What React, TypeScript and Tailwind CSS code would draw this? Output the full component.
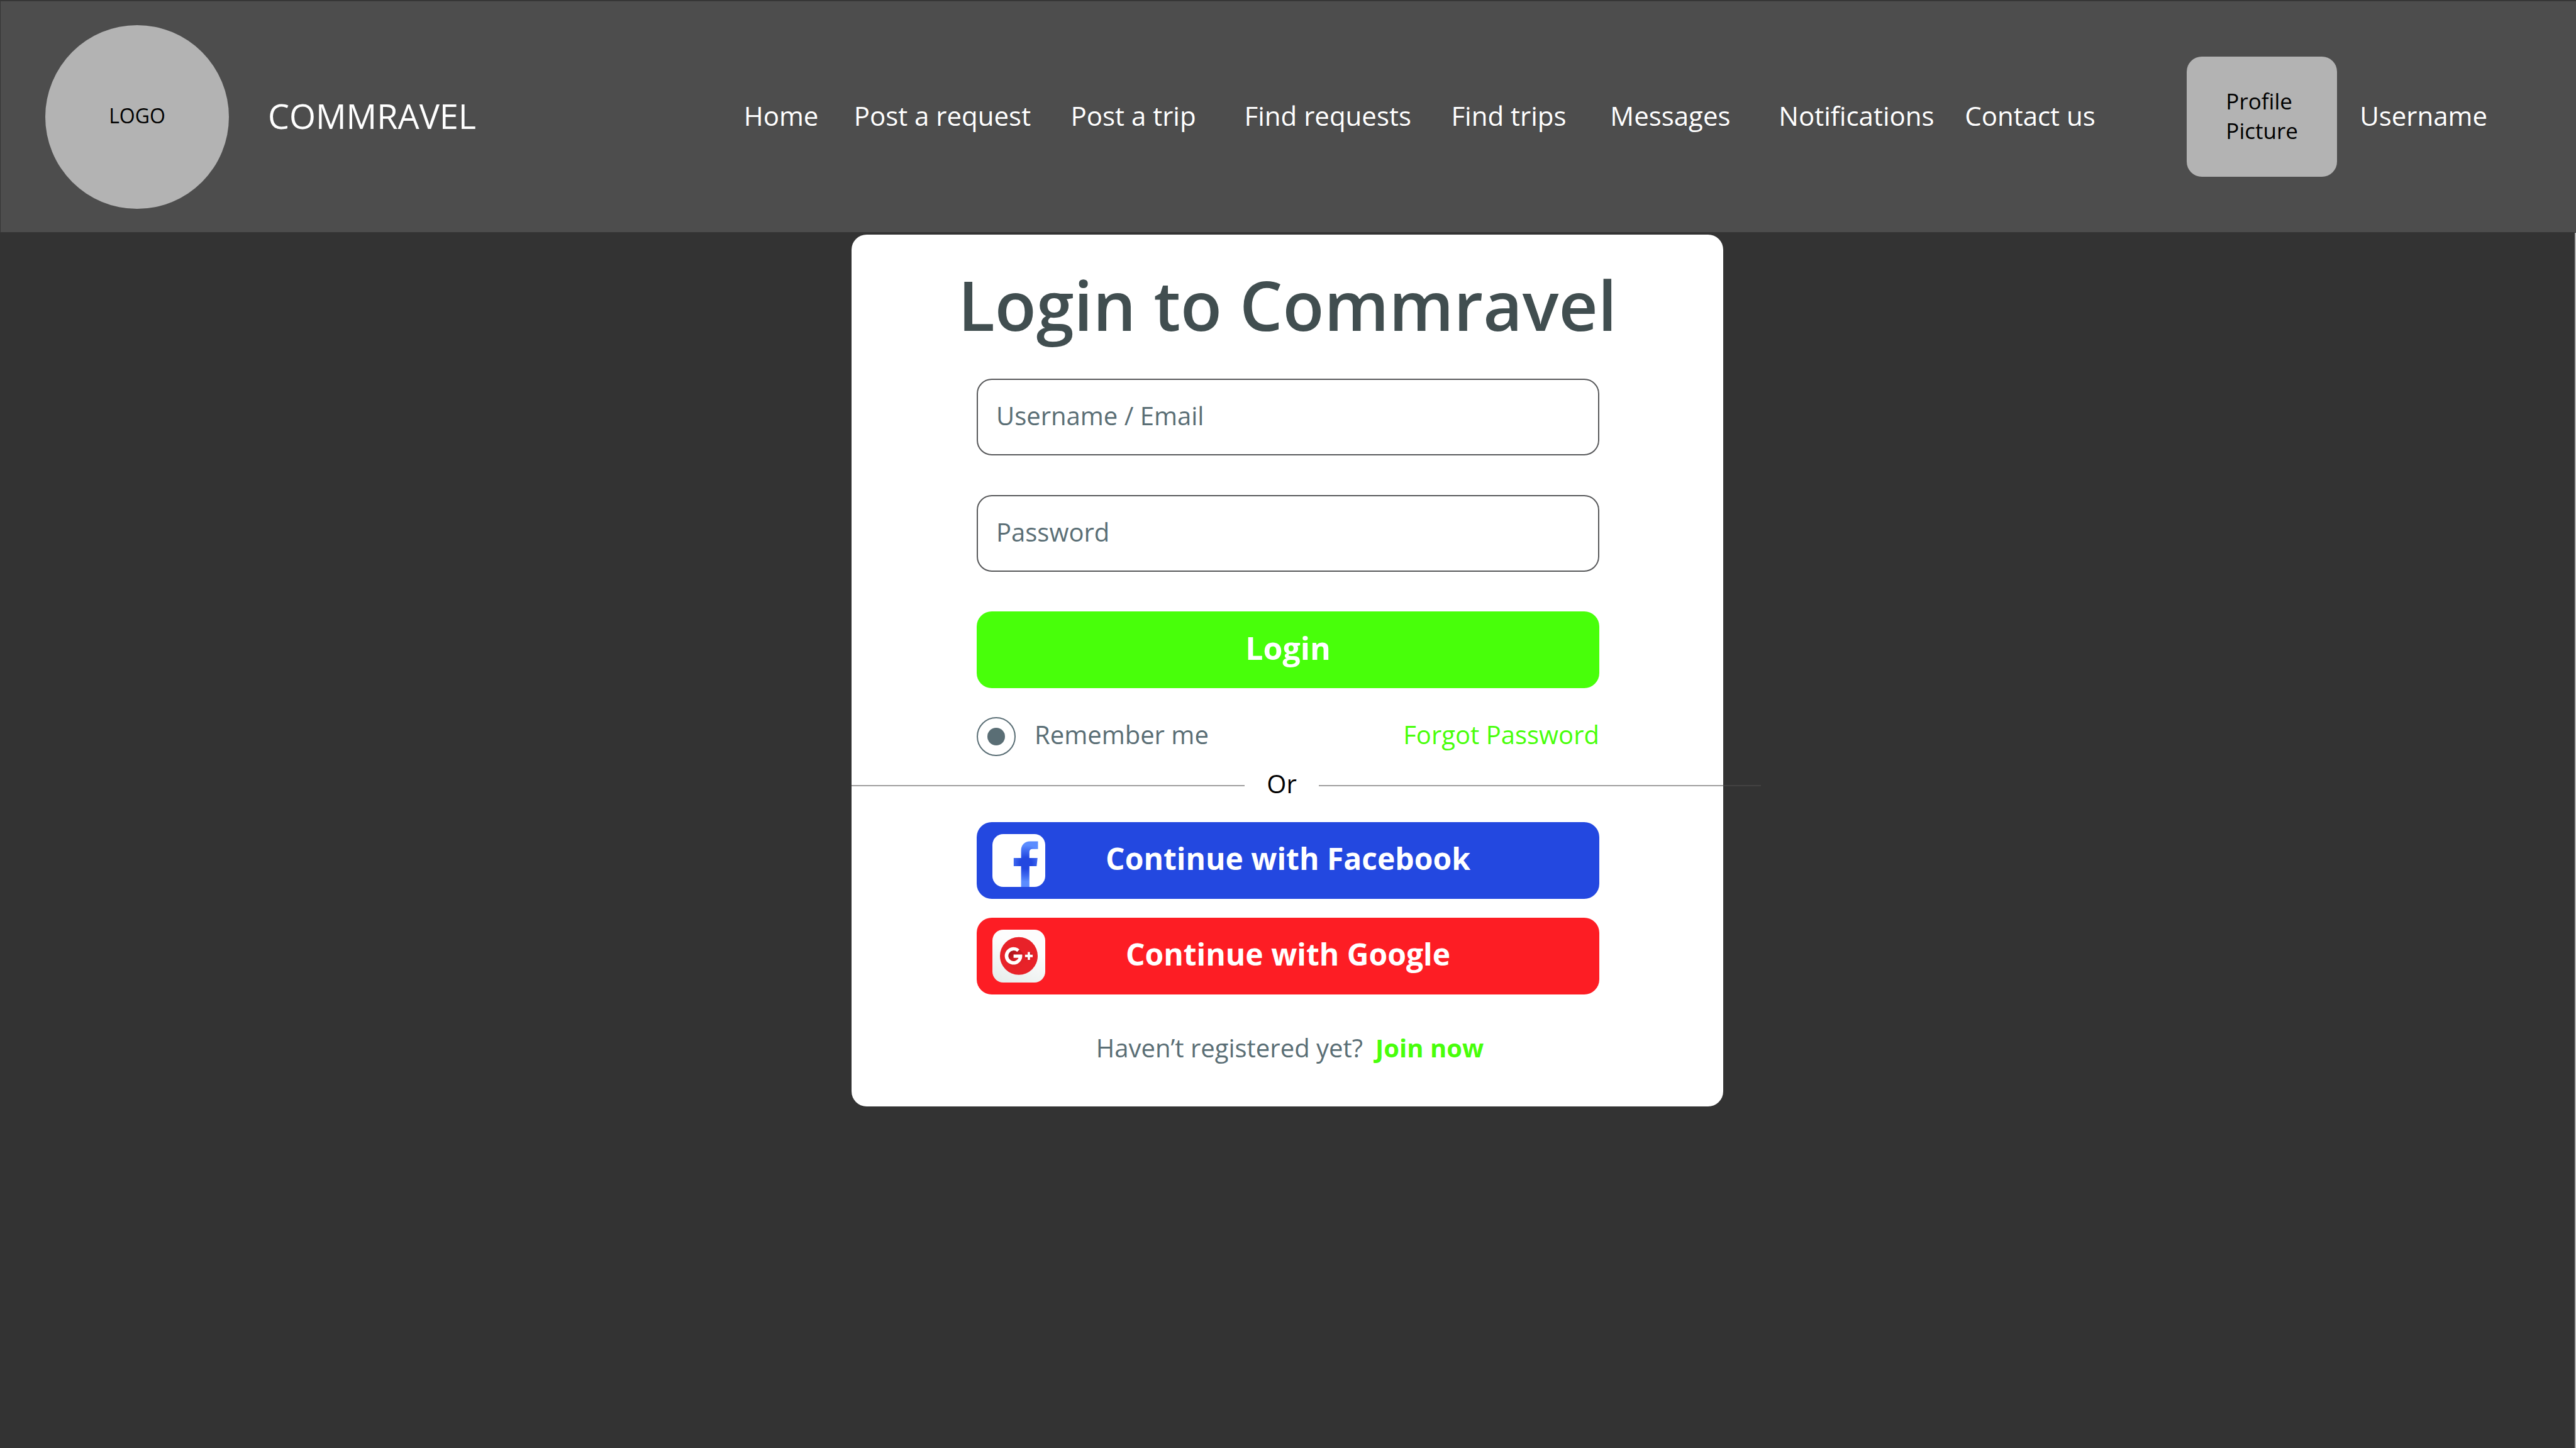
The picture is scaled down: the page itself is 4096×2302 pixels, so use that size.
import type { ReactNode } from "react";

const navLinks = [
  "Home",
  "Post a request",
  "Post a trip",
  "Find requests",
  "Find trips",
  "Messages",
  "Notifications",
  "Contact us",
];

function FacebookIcon() {
  return (
    <svg viewBox="0 0 350 350" className="size-[84px]" aria-hidden="true">
      <defs>
        <radialGradient id="fb-shade" gradientUnits="userSpaceOnUse" cx="222" cy="194" r="128">
          <stop offset="0.3" stopColor="#2348e0" />
          <stop offset="0.62" stopColor="#3c66ef" />
          <stop offset="0.95" stopColor="#5b8cff" />
        </radialGradient>
      </defs>
      <rect width="350" height="350" rx="72" fill="#fff" />
      <path
        d="M190 350V213H141V158H190V108C190 72 214 48 250 48H302V99H266C252 99 245 107 245 120V158H299L293 213H245V350Z"
        fill="url(#fb-shade)"
      />
    </svg>
  );
}

function GooglePlusIcon() {
  return (
    <svg viewBox="0 0 350 350" className="size-[84px]" aria-hidden="true">
      <defs>
        <linearGradient id="gp-tile" x1="0.25" y1="1" x2="0.55" y2="0.3">
          <stop offset="0" stopColor="#e8edec" />
          <stop offset="1" stopColor="#fdfdfd" />
        </linearGradient>
        <linearGradient id="gp-shadow" gradientUnits="userSpaceOnUse" x1="130" y1="140" x2="215" y2="240">
          <stop offset="0" stopColor="#a9141b" />
          <stop offset="1" stopColor="#e82229" stopOpacity="0" />
        </linearGradient>
        <linearGradient id="gp-plus-shadow" gradientUnits="userSpaceOnUse" x1="236" y1="168" x2="270" y2="205">
          <stop offset="0" stopColor="#a9141b" />
          <stop offset="1" stopColor="#e82229" stopOpacity="0" />
        </linearGradient>
        <clipPath id="gp-disc">
          <circle cx="175" cy="174" r="125" />
        </clipPath>
      </defs>
      <rect width="350" height="350" rx="72" fill="url(#gp-tile)" />
      <circle cx="175" cy="174" r="125" fill="#e82229" />
      <g clipPath="url(#gp-disc)">
        <path d="M105 150L140 120L179 131L290 242L230 320L180 296L99 215Z" fill="url(#gp-shadow)" />
        <path d="M249 148L320 219L290 256L216 182Z" fill="url(#gp-plus-shadow)" />
      </g>
      <path d="M179 131A58 58 0 1 0 197 165H140V186H173A35 35 0 1 1 164 147Z" fill="#fff" />
      <path d="M234 148H249V166H267V182H249V200H234V182H216V166H234Z" fill="#fff" />
    </svg>
  );
}

function SocialButton({ icon, color, children }: { icon: ReactNode; color: string; children: ReactNode }) {
  return (
    <button
      type="button"
      className={`grid h-[122px] w-full grid-cols-[84px_1fr_84px] items-center rounded-3xl px-[25px] text-[48px] font-bold text-white ${color}`}
    >
      {icon}
      <span className="pb-1.5">{children}</span>
    </button>
  );
}

function Header() {
  return (
    <header className="grid h-[370px] grid-cols-[1182fr_2295fr_619fr] items-center border-t-2 border-b border-l border-[#363636] bg-[#4d4d4d] text-[42px] leading-[56px] text-white">
      <div className="flex items-center gap-[62px] pl-[71px]">
        <div className="flex size-[292px] items-center justify-center rounded-full bg-[#b3b3b3] pb-1 text-[32px] text-black">
          LOGO
        </div>
        <span className="pb-1 text-[54px]">COMMRAVEL</span>
      </div>
      <nav aria-label="Main" className="pb-1">
        <ul className="grid grid-cols-[175fr_345fr_276fr_329fr_253fr_268fr_296fr_353fr]">
          {navLinks.map((label) => (
            <li key={label} className="whitespace-nowrap">
              <a href="#">{label}</a>
            </li>
          ))}
        </ul>
      </nav>
      <div className="flex items-center gap-9">
        <div className="flex h-[191px] w-[239px] items-center justify-center rounded-3xl bg-[#b3b3b3] pb-1 text-[35px] leading-[47px] text-black">
          <span>
            Profile
            <br />
            Picture
          </span>
        </div>
        <a href="#" className="pb-1">
          Username
        </a>
      </div>
    </header>
  );
}

const fieldClass =
  "h-[122px] w-full rounded-3xl border-2 border-[#57585a] bg-white pr-8 pb-1.5 pl-[29px] text-[40px] text-[#5a6e75] placeholder:text-[#5a6e75] placeholder:opacity-100";

export default function App() {
  return (
    <div className="flex min-h-screen flex-col bg-[#333333] font-['Open_Sans',sans-serif]">
      <Header />
      <main className="flex-1 border-r-2 border-[#b4b4b4] pt-[3px]">
        <form
          className="mx-auto w-[1386px] max-w-full rounded-3xl bg-white pt-[52px] pb-[66px] text-[40px] leading-[54px] text-[#5a6e75]"
          onSubmit={(e) => e.preventDefault()}
        >
          <h1 className="text-center text-[108px] leading-[120px] font-semibold text-[#414e50]">Login to Commravel</h1>

          <div className="flex flex-col gap-[63px] pt-[57px] pr-[197px] pl-[199px]">
            <input type="text" aria-label="Username / Email" placeholder="Username / Email" className={fieldClass} />
            <input type="password" aria-label="Password" placeholder="Password" className={fieldClass} />
            <button type="submit" className="h-[122px] w-full rounded-3xl bg-[#48ff0a] pb-1.5 text-[50px] font-bold text-white">
              Login
            </button>
          </div>

          <div className="flex items-center justify-between pt-[46px] pr-[197px] pl-[199px]">
            <label className="flex items-center gap-[30px]">
              <input
                type="radio"
                defaultChecked
                className="size-[62px] appearance-none rounded-full border-2 border-[#5a6e75] bg-[#5a6e75] bg-clip-content p-[15px]"
              />
              <span className="pb-1.5">Remember me</span>
            </label>
            <a href="#" className="pb-1.5 text-[#48ff0a]">
              Forgot Password
            </a>
          </div>

          <div className="mt-[17px] -mr-[60px] grid h-[54px] grid-cols-[625fr_118px_703fr] items-center">
            <span className="h-0.5 bg-[#514f4f]/55" />
            <span className="pb-1.5 text-center text-black">Or</span>
            <span className="h-0.5 bg-[#514f4f]/55" />
          </div>

          <div className="flex flex-col gap-[30px] pt-[34px] pr-[197px] pl-[199px]">
            <SocialButton icon={<FacebookIcon />} color="bg-[#2348e0]">
              Continue with Facebook
            </SocialButton>
            <SocialButton icon={<GooglePlusIcon />} color="bg-[#fd1d24]">
              Continue with Google
            </SocialButton>
          </div>

          <p className="flex justify-center gap-5 pt-[58px] pl-2">
            <span>Haven’t registered yet?</span>
            <a href="#" className="font-bold text-[#48ff0a]">
              Join now
            </a>
          </p>
        </form>
      </main>
    </div>
  );
}
